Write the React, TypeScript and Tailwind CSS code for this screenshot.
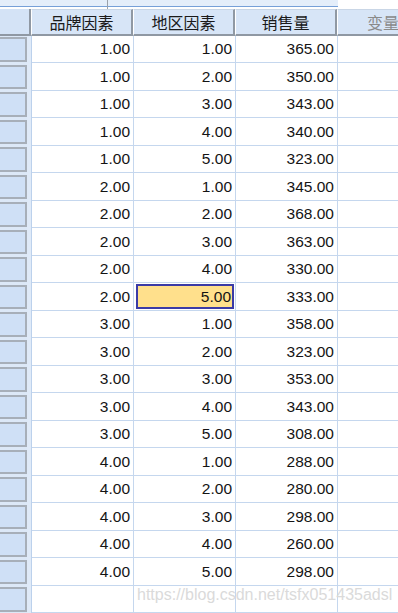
import React from "react";

const rows: [string, string, string][] = [
  ["1.00", "1.00", "365.00"],
  ["1.00", "2.00", "350.00"],
  ["1.00", "3.00", "343.00"],
  ["1.00", "4.00", "340.00"],
  ["1.00", "5.00", "323.00"],
  ["2.00", "1.00", "345.00"],
  ["2.00", "2.00", "368.00"],
  ["2.00", "3.00", "363.00"],
  ["2.00", "4.00", "330.00"],
  ["2.00", "5.00", "333.00"],
  ["3.00", "1.00", "358.00"],
  ["3.00", "2.00", "323.00"],
  ["3.00", "3.00", "353.00"],
  ["3.00", "4.00", "343.00"],
  ["3.00", "5.00", "308.00"],
  ["4.00", "1.00", "288.00"],
  ["4.00", "2.00", "280.00"],
  ["4.00", "3.00", "298.00"],
  ["4.00", "4.00", "260.00"],
  ["4.00", "5.00", "298.00"],
  ["", "", ""],
];

function RowHead() {
  return (
    <div className="flex h-full w-[32px] shrink-0 bg-[#dce8f7]">
      <div className="flex h-full w-[27px] items-center">
        <div className="h-[24.5px] w-[27px] border-y-2 border-r-2 border-[#a7afb9] bg-[#cfe0f6]" />
      </div>
      <div className="h-full w-[5px] border-r border-[#bcd1ec] bg-[#dfeaf8]" />
    </div>
  );
}

function Cell({ v, sel }: { v: string; sel?: boolean }) {
  if (sel) {
    return (
      <div className="flex h-full w-[102px] shrink-0 border-b border-r border-[#c5d7ee] p-[1px] pl-[2px]">
        <div className="flex h-full w-full items-center justify-end border-2 border-[#3b3ba6] bg-[#ffe08c] pr-[1px]">
          {v}
        </div>
      </div>
    );
  }
  return (
    <div className="flex h-full w-[102px] shrink-0 items-center justify-end border-b border-r border-[#c5d7ee] pr-[3px]">
      {v}
    </div>
  );
}

export default function App() {
  return (
    <div
      className="relative h-[613px] w-[398px] overflow-hidden bg-white text-[15.5px] text-[#141414]"
      style={{ fontFamily: '"Liberation Sans", Arial, sans-serif' }}
    >
      {/* top strip */}
      <div className="flex h-[9px]">
        <div className="h-[9px] w-[108px] shrink-0 border-r border-[#9aa1aa]">
          <div className="h-[6.5px] border-b-[1.5px] border-[#76a0d8] bg-[#e4eefa]" />
        </div>
        <div className="h-[9px] w-[230px] shrink-0">
          <div className="h-[6.5px] border-b-[1.5px] border-[#76a0d8] bg-[#e4eefa]" />
        </div>
      </div>

      {/* header */}
      <div
        className="flex h-[26.5px] text-[16px]"
        style={{ fontFamily: '"Noto Sans CJK SC", "Liberation Sans", sans-serif' }}
      >
        <div className="h-full w-[31px] shrink-0 border-b-2 border-r-2 border-[#8f98a3] bg-[#d4e3f6]" />
        {["品牌因素", "地区因素", "销售量"].map((t) => (
          <div
            key={t}
            className="flex h-full w-[102px] shrink-0 items-center justify-center border-b-2 border-l border-r-2 border-t border-[#8f98a3] border-l-white border-t-[#c9d6e6] bg-[#d7e5f7] leading-none text-[#1a1a1a]"
          >
            {t}
          </div>
        ))}
        <div className="flex h-full w-[102px] shrink-0 items-center justify-start border-b-2 border-l border-t border-[#8f98a3] border-l-white border-t-[#c9d6e6] bg-[#d7e5f7] pl-[29px] leading-none text-[#8a8a8a]">
          变量
        </div>
      </div>

      {/* data rows */}
      {rows.map((r, i) => (
        <div key={i} className="flex h-[27.5px]">
          <RowHead />
          <Cell v={r[0]} />
          <Cell v={r[1]} sel={i === 9} />
          <Cell v={r[2]} />
          <Cell v="" />
        </div>
      ))}

      {/* watermark */}
      <div className="absolute left-[137px] top-[585px] text-[16px] leading-[20px] text-[#dadada]">
        https://blog.csdn.net/tsfx051435adsl
      </div>
    </div>
  );
}
